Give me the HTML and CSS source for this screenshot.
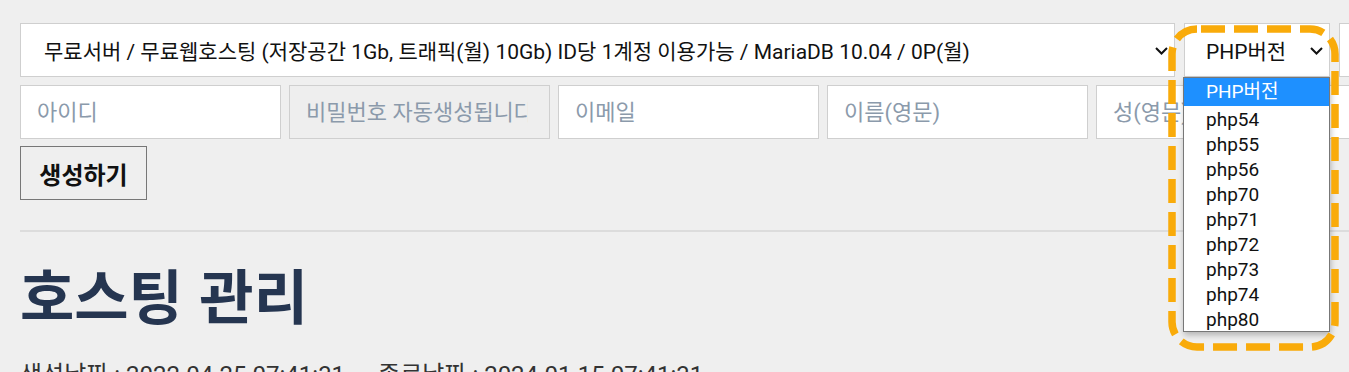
FILE: index.html
```html
<!DOCTYPE html>
<html lang="ko">
<head>
<meta charset="utf-8">
<title>호스팅 관리</title>
<link rel="stylesheet" href="styles.css">
</head>
<body>
<div class="page">
  <div class="row row-top">
    <div class="select select-plan">
      <span>무료서버 / 무료웹호스팅 (저장공간 1Gb, 트래픽(월) 10Gb) ID당 1계정 이용가능 / MariaDB 10.04 / 0P(월)</span>
      <svg class="chev" width="13" height="8" viewBox="0 0 13 8"><path d="M1 1 L6.5 6.5 L12 1" fill="none" stroke="#111" stroke-width="2"/></svg>
    </div>
    <div class="php-wrap">
      <div class="select select-php">
        <span>PHP버전</span>
        <svg class="chev" width="13" height="8" viewBox="0 0 13 8"><path d="M1 1 L6.5 6.5 L12 1" fill="none" stroke="#111" stroke-width="2"/></svg>
      </div>
      <ul class="dropdown">
        <li class="active">PHP버전</li>
        <li>php54</li>
        <li>php55</li>
        <li>php56</li>
        <li>php70</li>
        <li>php71</li>
        <li>php72</li>
        <li>php73</li>
        <li>php74</li>
        <li>php80</li>
      </ul>
      <svg class="highlight" width="180" height="340" viewBox="0 0 180 340"><rect x="9" y="9" width="163" height="318" rx="25" ry="25" fill="none" stroke="#f9ab0a" stroke-width="7.5" stroke-dasharray="24 9" stroke-dashoffset="-4"/></svg>
    </div>
    <div class="select select-extra"></div>
  </div>
  <div class="row row-inputs">
    <input class="field" type="text" placeholder="아이디">
    <input class="field disabled" type="text" placeholder="비밀번호 자동생성됩니다" disabled>
    <input class="field" type="text" placeholder="이메일">
    <input class="field" type="text" placeholder="이름(영문)">
    <input class="field" type="text" placeholder="성(영문)">
  </div>
  <button class="btn">생성하기</button>
  <hr class="divider">
  <h1 class="title">호스팅 관리</h1>
  <p class="dates"><span>생성날짜 : 2022.04.25 07:41:31</span><span class="end">종료날짜 : 2024.01.15 07:41:31</span></p>
</div>
</body>
</html>
```
FILE: styles.css
```css
* { box-sizing: border-box; }
html, body { margin: 0; padding: 0; }
body {
  background: #efefef;
  font-family: Roboto, "Noto Sans CJK KR", sans-serif;
  color: #111;
  overflow: hidden;
  width: 1349px;
  height: 372px;
}
.page { padding: 23px 0 0 20px; }
.row { display: flex; flex-wrap: nowrap; }
.row-top { gap: 9px; height: 54px; }
.select {
  height: 54px;
  background: #fff;
  border: 1px solid #cfcfcf;
  display: flex;
  align-items: center;
  flex-shrink: 0;
  font-size: 21px;
  color: #111;
  position: relative;
  white-space: nowrap;
}
.select-plan { width: 1155px; padding-left: 23px; }
.select-php { width: 146px; padding-left: 21px; }
.select-extra { width: 60px; }
.chev { position: absolute; right: 6px; top: 23px; }
.php-wrap { position: relative; width: 146px; flex-shrink: 0; }
.dropdown {
  position: absolute;
  left: -1px;
  top: 54px;
  width: 147px;
  margin: 0;
  padding: 0;
  list-style: none;
  background: #fff;
  border: 1px solid #777;
  box-shadow: 1px 3px 6px rgba(0,0,0,0.25);
  z-index: 5;
}
.dropdown li {
  height: 25px;
  padding-top: 3px;
  line-height: 22px;
  padding-left: 22px;
  font-size: 19px;
  color: #111;
}
.dropdown li.active {
  height: 28px;
  padding-top: 0;
  line-height: 28px;
  background: #1e90ff;
  color: #fff;
}
.highlight { position: absolute; left: -21px; top: -3px; z-index: 6; pointer-events: none; }
.row-inputs { gap: 8px; margin-top: 8px; height: 54px; }
.field {
  width: 261px;
  height: 54px;
  flex-shrink: 0;
  margin: 0;
  background: #fff;
  border: 1px solid #cfcfcf;
  padding: 0 18px 0 16px;
  font-family: Roboto, "Noto Sans CJK KR", sans-serif;
  font-size: 22px;
  color: #111;
  outline: none;
}
.field::placeholder { color: #8b9aab; opacity: 1; }
.field.disabled { background: #eeeeee; padding-right: 21px; }
.btn {
  display: block;
  margin-top: 7px;
  width: 127px;
  height: 54px;
  background: #efefef;
  border: 1px solid #777;
  font-family: Roboto, "Noto Sans CJK KR", sans-serif;
  font-size: 24px;
  font-weight: 700;
  color: #111;
  padding: 0;
}
.divider {
  margin: 30px 0 0;
  border: 0;
  border-top: 2px solid #dcdcdc;
  height: 0;
}
.title {
  margin: 22px 0 0;
  font-family: "Noto Sans CJK KR", sans-serif;
  font-size: 59px;
  font-weight: 700;
  line-height: 80px;
  color: #253550;
}
.dates {
  margin: 26px 0 0;
  font-size: 24px;
  color: #333;
  line-height: 30px;
  white-space: nowrap;
}
.dates .end { margin-left: 33px; }
```
